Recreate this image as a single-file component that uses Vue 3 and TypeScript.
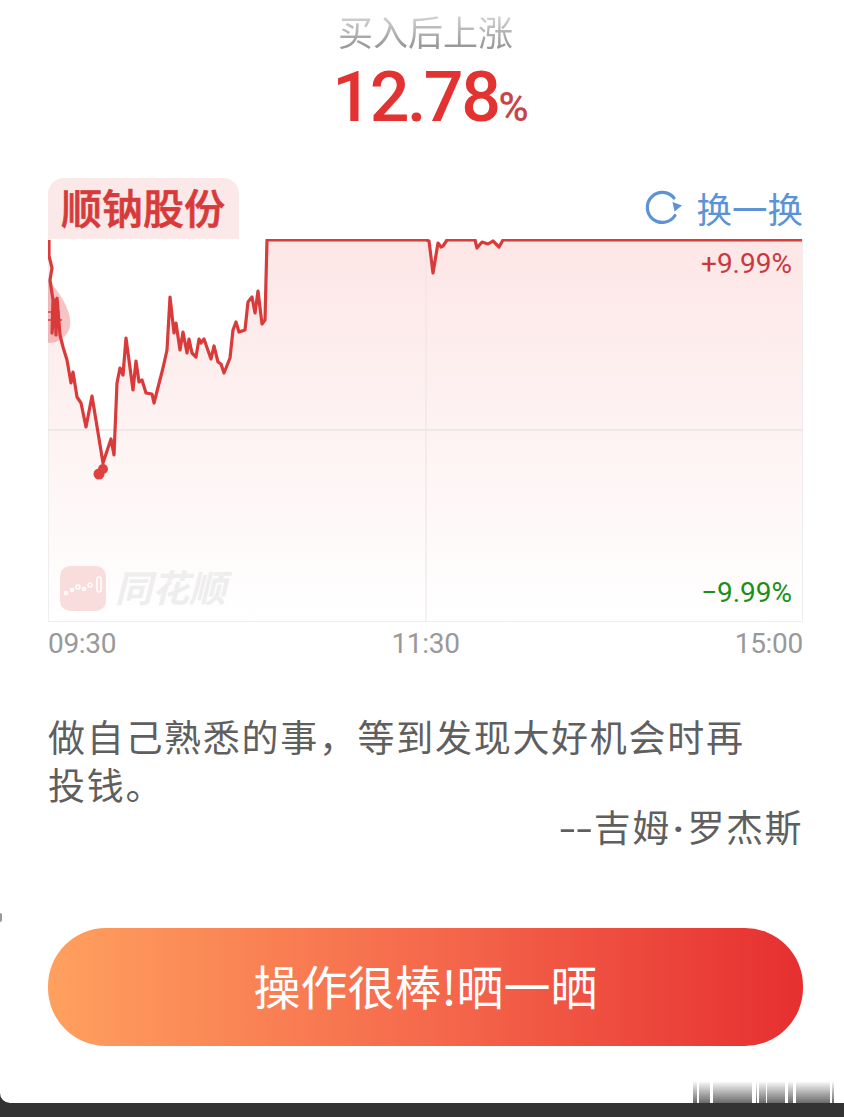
<script setup lang="ts">
// price line, traced in page pixels
const linePts = [
  [49, 240], [49, 256], [52, 268], [50, 280], [53, 300], [52, 333], [55, 300], [56, 335], [57, 298], [60, 335], [63, 347], [67, 360], [71, 383],
  [73, 372], [77, 397], [81, 403], [86, 427], [92, 396], [103, 463], [111, 439], [114, 455], [117, 383],
  [120, 368], [123, 375], [126, 338], [133, 390], [136, 361], [139, 382], [142, 380], [146, 393], [152, 394],
  [154, 403], [163, 368], [167, 350], [170, 297], [174, 333], [176, 323], [180, 350], [183, 332], [187, 353],
  [189, 339], [192, 353], [196, 357], [199, 339], [201, 343], [204, 339], [211, 359], [214, 346], [218, 362],
  [221, 364], [224, 373], [230, 358], [233, 330], [236, 322], [239, 332], [245, 330], [248, 302], [252, 297],
  [255, 313], [258, 291], [262, 324], [265, 320], [267, 240], [426, 240], [429, 241], [433, 273], [436, 255],
  [438, 243], [441, 247], [443, 246], [447, 240], [475, 240], [477, 248], [482, 242], [488, 244], [493, 241],
  [499, 247], [503, 240], [802, 240]
]
const line = linePts.map(p => p.join(',')).join(' ')
const area = `${line} 802,622 49,622`

// blurred site mark in the bottom corner: [width, gap after]
const marks = [
  [4, 2], [11, 3], [39, 4], [1, 2], [7, 1], [18, 3], [5, 3], [34, 2], [2, 0]
]
</script>

<template>
  <div class="page">
    <div class="card">
      <i class="edge-notch"></i>
      <div class="summary">
        <div class="summary-label">买入后上涨</div>
        <div class="summary-value">12.78<span class="percent">%</span></div>
      </div>

      <div class="chart-head">
        <div class="stock-tab">顺钠股份</div>
        <div class="swap">
          <svg class="swap-icon" viewBox="0 0 40 40" width="40" height="40">
            <path d="M30 10 A15 15 0 1 0 31 27.500" fill="none" stroke="#5b93d6" stroke-width="3.200" stroke-linecap="round" />
            <path d="M28.500 14 L38 17.500 L30.500 23.500 Z" fill="#5b93d6" />
          </svg>
          <span>换一换</span>
        </div>
      </div>

      <div class="chart">
        <svg class="plot" viewBox="48 239 755 383" width="755" height="383">
          <defs>
            <linearGradient id="areaFill" x1="0" y1="0" x2="0" y2="1">
              <stop offset="0" stop-color="#fde6e6" />
              <stop offset="1" stop-color="#ffffff" />
            </linearGradient>
          </defs>
          <polygon :points="area" fill="url(#areaFill)" />
          <path d="M48.500 239 V621.500 H802.500 V239" fill="none" stroke="#eeeeee" stroke-width="1" />
          <line x1="48" y1="430" x2="803" y2="430" stroke="#e9e4e4" stroke-width="1.500" />
          <line x1="426" y1="239" x2="426" y2="622" stroke="#e9e4e4" stroke-width="1" />
          <path d="M48 280 C60 292 72 312 70 326 C68 337 58 343 48 343 Z" fill="#e8555a" fill-opacity="0.35" />
          <path d="M48 312 L60 312 M48 320 L62 320" stroke="#e0393a" stroke-width="1.500" />
          <polyline :points="line" fill="none" stroke="#d93a3a" stroke-width="3.200" stroke-linejoin="round" />
          <circle cx="99" cy="474" r="5.500" fill="#e0403f" />
          <circle cx="103" cy="469" r="5" fill="#e0403f" />
          <!-- app logo -->
          <rect x="60" y="566" width="46" height="45" rx="10" fill="#f9dcdc" />
          <g fill="none" stroke="#ffffff" stroke-width="1.500">
            <circle cx="66" cy="593" r="1.500" />
            <circle cx="72" cy="590" r="1.500" />
            <circle cx="78" cy="587" r="2" />
            <circle cx="84" cy="589" r="1.500" />
            <circle cx="90" cy="585" r="2" />
            <rect x="97" y="577" width="4" height="15" rx="2" />
          </g>
        </svg>
        <span class="brand">同花顺</span>
        <span class="limit limit-up">+9.99%</span>
        <span class="limit limit-down">−9.99%</span>
      </div>

      <div class="times">
        <span>09:30</span>
        <span>11:30</span>
        <span>15:00</span>
      </div>

      <p class="quote">做自己熟悉的事，等到发现大好机会时再投钱。</p>
      <p class="author"><span class="dash">--</span>吉姆<span class="dot">·</span>罗杰斯</p>

      <button type="button" class="share">操作很棒!晒一晒</button>

      <div class="site-mark">
        <i v-for="(m, i) in marks" :key="i" :style="{ width: m[0] + 'px', marginRight: m[1] + 'px' }"></i>
      </div>
    </div>
  </div>
</template>

<style>
html,
body {
  margin: 0;
  background: #333;
}
</style>

<style scoped>
.page {
  width: 844px;
  height: 1117px;
  background: #333;
  overflow: hidden;
  font-family: "Roboto", "Noto Sans CJK SC", sans-serif;
}

.card {
  position: relative;
  box-sizing: border-box;
  height: 1103px;
  padding: 0 41px 0 48px;
  background: #fff;
  border-radius: 0 0 0 10px;
}

.edge-notch {
  position: absolute;
  left: 0;
  top: 913px;
  width: 2px;
  height: 9px;
  border-radius: 0 2px 2px 0;
  background: #999;
}

.summary {
  height: 178px;
  padding-top: 10px;
  box-sizing: border-box;
  text-align: center;
}

.summary-label {
  height: 42px;
  font: 400 35px/42px "Noto Sans CJK SC", sans-serif;
  color: transparent;
  background: linear-gradient(180deg, #d2d2d2 15%, #999 85%);
  -webkit-background-clip: text;
  background-clip: text;
}

.summary-value {
  margin-top: 10px;
  padding-left: 10px;
  font: 500 70px/70px "Roboto", sans-serif;
  letter-spacing: -2.500px;
  color: #e23232;
}

.percent {
  font-size: 41px;
  letter-spacing: 0;
  color: #c9444a;
}

.chart-head {
  display: flex;
  justify-content: space-between;
  align-items: flex-start;
  height: 61px;
}

.stock-tab {
  box-sizing: border-box;
  width: 191px;
  height: 61px;
  padding-left: 13px;
  border-radius: 16px 16px 0 0;
  background: #fbe8e8;
  font: 500 41px/56px "Noto Sans CJK SC", sans-serif;
  -webkit-text-stroke: 0.7px #d83a3a;
  color: #d83a3a;
}

.swap {
  display: flex;
  align-items: center;
  gap: 12px;
  height: 59px;
  font: 400 35.500px/59px "Noto Sans CJK SC", sans-serif;
  color: #5b93d6;
}

.swap-icon {
  display: block;
}

.chart {
  position: relative;
  width: 755px;
  height: 383px;
}

.plot {
  display: block;
}

.brand {
  position: absolute;
  left: 67px;
  top: 327px;
  font: italic 700 37px/40px "Noto Sans CJK SC", sans-serif;
  color: #eeeeee;
}

.limit {
  position: absolute;
  right: 11px;
  font: 400 28px/32px "Roboto", sans-serif;
}

.limit-up {
  top: 9px;
  color: #c9383f;
}

.limit-down {
  top: 338px;
  color: #1a8f1a;
}

.times {
  display: flex;
  justify-content: space-between;
  width: 755px;
  height: 42px;
  padding-top: 2px;
  box-sizing: border-box;
  font: 400 28px/40px "Roboto", sans-serif;
  letter-spacing: -0.300px;
  color: #999;
}

.quote {
  margin: 48px 0 0;
  width: 710px;
  font: 400 37px/48px "Noto Sans CJK SC", sans-serif;
  letter-spacing: 1.700px;
  color: #5f5f5f;
}

.author {
  margin: 0;
  width: 755px;
  height: 44px;
  text-align: right;
  font: 400 37px/44px "Roboto", "Noto Sans CJK SC", sans-serif;
  letter-spacing: 1.500px;
  color: #5f5f5f;
}

/* the source's hyphens are longer than Roboto's */
.dash {
  display: inline-block;
  margin-left: 12px;
  letter-spacing: 1px;
  transform: scaleX(1.5);
  transform-origin: right center;
}

.dot {
  padding: 0 2px;
  font-weight: 700;
}

.share {
  display: block;
  box-sizing: border-box;
  width: 755px;
  height: 118px;
  margin-top: 76px;
  padding: 0 0 5px;
  border: none;
  border-radius: 58px;
  background: linear-gradient(90deg, #ffa05e 0%, #f4644a 55%, #e62f30 100%);
  font: 400 47px/60px "Noto Sans CJK SC", sans-serif;
  color: #fff;
}

.site-mark {
  position: absolute;
  left: 693px;
  top: 1082px;
  display: flex;
  height: 21px;
  filter: blur(0.7px);
}

.site-mark i {
  display: block;
  height: 21px;
  background: linear-gradient(180deg, rgba(90, 90, 90, 0.05), rgba(70, 70, 70, 0.8));
}
</style>
